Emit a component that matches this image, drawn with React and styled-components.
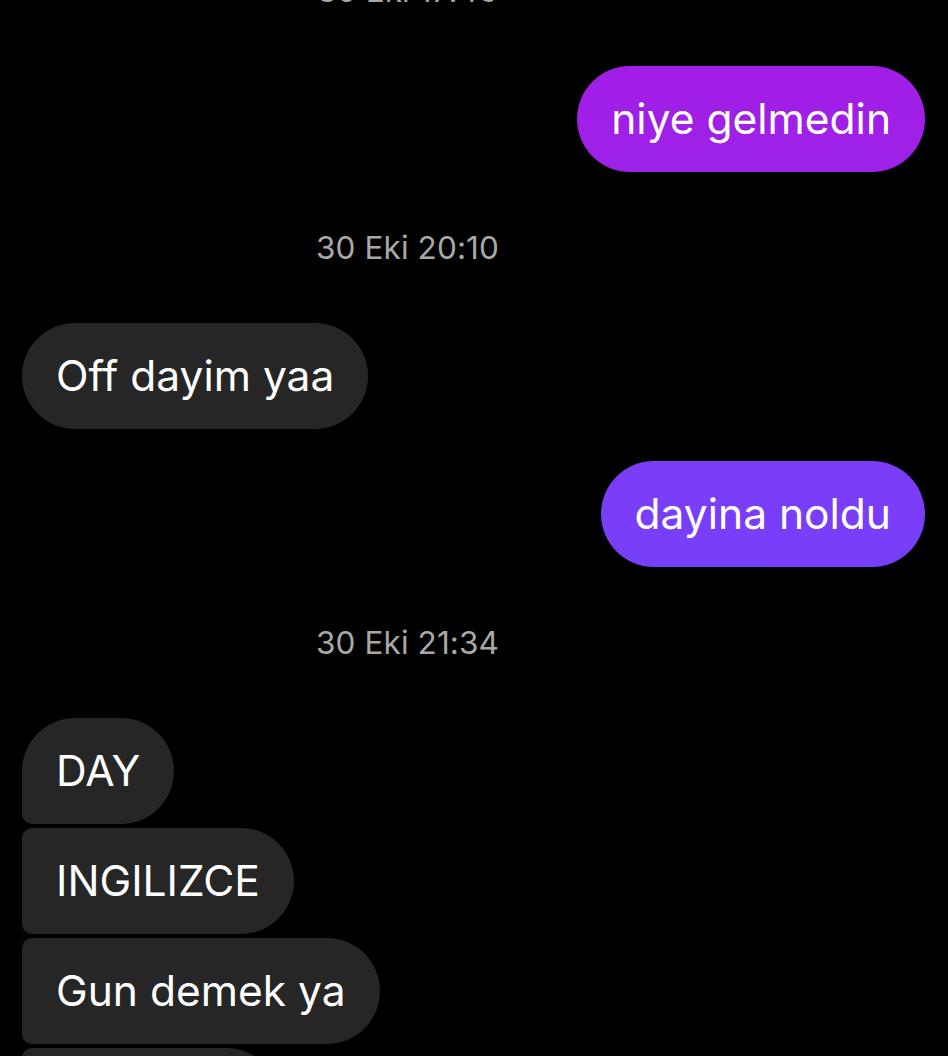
import styled, { createGlobalStyle } from "styled-components";

const GlobalStyle = createGlobalStyle`
html, body {
  margin: 0;
  padding: 0;
  background: #000;
}
body {
  font-family: Inter, "Noto Sans", sans-serif;
  height: 1056px;
  overflow: hidden;
}
`

const Thread = styled.div`
display: flex;
flex-direction: column;
padding: 0 23px 0 22px;
margin-top: -85px;
background: #000;
`

const Stamp = styled.div`
flex-shrink: 0;
height: 151px;
display: flex;
align-items: center;
justify-content: center;
color: #a8a8a8;
font-size: 31.5px;
letter-spacing: 0.1px;
padding-right: 132px;
`

const Row = styled.div`
flex-shrink: 0;
display: flex;
justify-content: ${(p) => (p.$mine ? "flex-end" : "flex-start")};
margin-top: ${(p) => p.$gap || 0}px;
`

const Bubble = styled.div`
font-size: 42.5px;
line-height: 54px;
padding: 26px 34px;
color: #fff;
white-space: nowrap;
border-radius: ${(p) => p.$radius || "53px"};
background: ${(p) => p.$bg || "#262626"};
`

const mine = {
    top: "linear-gradient(180deg, #a21de6 0%, #9d22e8 100%)",
    low: "linear-gradient(180deg, #7c3cf8 0%, #773ff9 100%)",
}

const App = () => {
    return (
        <>
            <GlobalStyle />
            <Thread>
                <Stamp>30 Eki 17:46</Stamp>

                <Row $mine>
                    <Bubble $bg={mine.top}>niye gelmedin</Bubble>
                </Row>

                <Stamp>30 Eki 20:10</Stamp>

                <Row>
                    <Bubble>Off dayim yaa</Bubble>
                </Row>

                <Row $mine $gap={32}>
                    <Bubble $bg={mine.low}>dayina noldu</Bubble>
                </Row>

                <Stamp>30 Eki 21:34</Stamp>

                <Row>
                    <Bubble $radius="53px 53px 53px 10px">DAY</Bubble>
                </Row>
                <Row $gap={4}>
                    <Bubble $radius="10px 53px 53px 10px">INGILIZCE</Bubble>
                </Row>
                <Row $gap={4}>
                    <Bubble $radius="10px 53px 53px 10px">Gun demek ya</Bubble>
                </Row>
                <Row $gap={4}>
                    <Bubble $radius="10px 53px 53px 10px">Bugun ya</Bubble>
                </Row>
            </Thread>
        </>
    );
}

export default App;
